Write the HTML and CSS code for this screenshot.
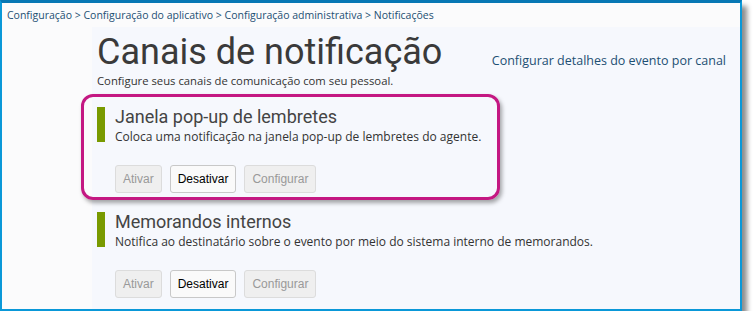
FILE: index.html
```html
<!DOCTYPE html>
<html lang="pt">
<head>
    <meta charset="UTF-8">
    <title>Canais de notificação</title>
    <link rel="stylesheet" href="styles.css">
</head>
<body>
    <div class="frame">
        <div class="breadcrumb">
            <a href="#">Configuração</a> &gt; <a href="#">Configuração do aplicativo</a> &gt; <a href="#">Configuração administrativa</a> &gt; <a href="#">Notificações</a>
        </div>
        <div class="page">
            <div class="gutter"></div>
            <div class="content">
                <div class="header">
                    <div>
                        <h1>Canais de notificação</h1>
                        <p class="subtitle">Configure seus canais de comunicação com seu pessoal.</p>
                    </div>
                    <a class="side-link" href="#">Configurar detalhes do evento por canal</a>
                </div>

                <div class="channel highlight">
                    <div class="channel-head">
                        <div class="bar"></div>
                        <div>
                            <h2>Janela pop-up de lembretes</h2>
                            <p class="desc">Coloca uma notificação na janela pop-up de lembretes do agente.</p>
                        </div>
                    </div>
                    <div class="actions">
                        <button class="btn" disabled>Ativar</button>
                        <button class="btn">Desativar</button>
                        <button class="btn" disabled>Configurar</button>
                    </div>
                </div>

                <div class="channel">
                    <div class="channel-head">
                        <div class="bar"></div>
                        <div>
                            <h2>Memorandos internos</h2>
                            <p class="desc">Notifica ao destinatário sobre o evento por meio do sistema interno de memorandos.</p>
                        </div>
                    </div>
                    <div class="actions">
                        <button class="btn" disabled>Ativar</button>
                        <button class="btn">Desativar</button>
                        <button class="btn" disabled>Configurar</button>
                    </div>
                </div>
            </div>
        </div>
    </div>
</body>
</html>
```

FILE: styles.css
```css
body {
    margin: 0;
    background: #fff;
    font-family: "Open Sans", Arial, sans-serif;
}
.frame {
    width: 738px;
    height: 306px;
    border: 2px solid #0a98d8;
    border-top: 3px solid #0777b4;
    background: #fbfbfc;
    box-shadow: 5px 6px 5px rgba(0, 0, 0, 0.45);
    overflow: hidden;
}
.breadcrumb {
    height: 24px;
    padding-left: 5px;
    font-size: 10.5px;
    line-height: 24px;
    color: #1d4f73;
}
.breadcrumb a {
    color: #1d4f73;
    text-decoration: none;
}
.page {
    display: flex;
    height: 282px;
}
.gutter {
    width: 90px;
}
.content {
    flex: 1;
    background: #f6f8fd;
    padding-left: 5px;
}
.header {
    display: flex;
    justify-content: space-between;
    align-items: flex-start;
    padding-right: 14px;
}
h1 {
    margin: 4px 0 0;
    font-family: Roboto, Arial, sans-serif;
    font-weight: 400;
    font-size: 36px;
    line-height: 42px;
    color: #3a3a3a;
}
.subtitle {
    margin: 0;
    font-size: 11.3px;
    line-height: 16px;
    color: #333;
}
.side-link {
    margin-top: 25px;
    font-size: 12.5px;
    color: #1d4f73;
    text-decoration: none;
}
.channel {
    margin-top: 10px;
}
.highlight {
    box-sizing: border-box;
    width: 419px;
    margin-top: 5px;
    margin-left: -16px;
    padding: 8px 0 4px 13px;
    border: 3px solid #c41882;
    border-radius: 12px;
    box-shadow: 2px 3px 4px rgba(0, 0, 0, 0.35);
}
.channel-head {
    display: flex;
    gap: 10px;
}
.bar {
    width: 8px;
    height: 35px;
    margin-top: 2px;
    background: #799a00;
}
h2 {
    margin: 0;
    font-family: Roboto, Arial, sans-serif;
    font-weight: 400;
    font-size: 18px;
    line-height: 24px;
    color: #444;
}
.desc {
    margin: 0;
    font-size: 12px;
    line-height: 16px;
    color: #333;
}
.actions {
    display: flex;
    gap: 8px;
    margin: 20px 0 0 18px;
}
.btn {
    height: 28px;
    padding: 0 7px;
    font-family: "Liberation Sans", Arial, sans-serif;
    font-size: 12px;
    color: #000;
    background: #fafafa;
    border: 1px solid #c8c8c8;
    border-radius: 3px;
}
.btn:disabled {
    color: #999;
    background: #efefef;
    border-color: #dcdcdc;
}
```
